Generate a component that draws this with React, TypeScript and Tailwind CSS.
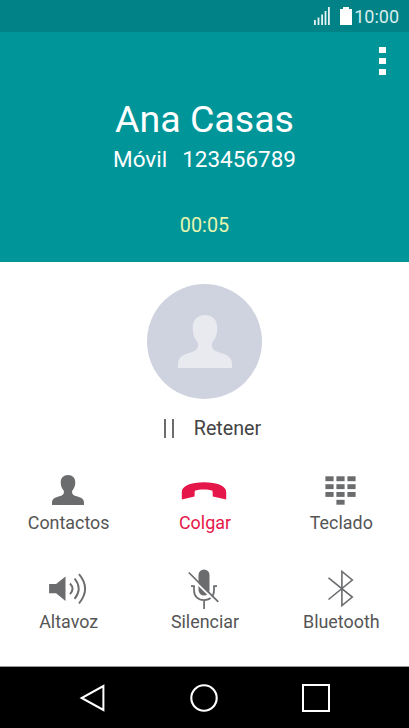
/**
 * In-call screen
 * Shows the caller, the call timer and the call actions.
 */
import type { ReactNode } from 'react';

interface IconProps {
  className?: string;
}

function PersonIcon({ className }: IconProps) {
  return (
    <svg viewBox="0 0 54 53" fill="currentColor" preserveAspectRatio="none" className={className}>
      <path d="M27 0C34.5 0 39.3 5 39.3 13C39.3 19 37.5 23.5 35 26.5C33.6 28.2 33.6 30.5 34.3 32.5C35.2 35.5 39 36.8 43 38C50 40.2 54 43 54 49V53H0V49C0 43 4 40.2 11 38C15 36.8 18.8 35.5 19.7 32.5C20.4 30.5 20.4 28.2 19 26.5C16.5 23.5 14.7 19 14.7 13C14.7 5 19.5 0 27 0Z" />
    </svg>
  );
}

function ContactsIcon() {
  return <PersonIcon className="mt-[5px] h-[30px] w-8" />;
}

function HangUpIcon() {
  return (
    <svg width="50" height="40" viewBox="0 0 50 40" fill="currentColor">
      <path d="M2.8 29.5V22C2.8 16 12 12.3 25 12.3S47.2 16 47.2 22V29.5L33.8 26.4L33.5 20.7C29 19 20.5 19 15.8 20.7L15.5 26.6Z" />
    </svg>
  );
}

function KeypadIcon() {
  return (
    <svg width="50" height="40" viewBox="0 0 50 40" fill="currentColor">
      {[6.3, 14.2, 22].map((y) =>
        [9.4, 20.4, 31.4].map((x) => <rect key={`${x}-${y}`} x={x} y={y} width="8.2" height="4.9" />)
      )}
      <rect x="20.4" y="29.8" width="8.2" height="4.9" />
    </svg>
  );
}

function SpeakerIcon() {
  return (
    <svg width="50" height="40" viewBox="0 0.8 50 40" fill="none" stroke="currentColor" strokeWidth="1.9">
      <path d="M6.1 15.7H13.1L22.5 8.3V32.7L13.1 25H6.1Z" fill="currentColor" stroke="none" />
      <path d="M27 15.3Q32 20.5 27 25.9M31.6 10.3Q39.8 20.5 31.6 30.7M36 6Q48.2 20.5 36 35.3" />
    </svg>
  );
}

function MuteIcon() {
  return (
    <svg width="50" height="40" viewBox="0 0.8 50 40" fill="none" stroke="currentColor" strokeWidth="1.7" className="overflow-visible">
      <rect x="19.5" y="1.3" width="11" height="26" rx="5.5" fill="currentColor" stroke="none" />
      <path d="M12 18H15V22C15 28 19 32 25.1 32S35 28 35 22V18H38M25.1 32V40.7" />
      <path d="M9 6.2L37.8 34.7" stroke="white" strokeWidth="2" />
      <path d="M9.8 4.3L39.3 33.7" />
    </svg>
  );
}

function BluetoothIcon() {
  return (
    <svg width="50" height="40" viewBox="0 0.8 50 40" fill="none" stroke="currentColor" strokeWidth="1.6">
      <path d="M12.5 9.7L36.3 28.9L25.9 37.3V3.3L36.3 11.8L12.5 31.3" />
    </svg>
  );
}

interface CallActionProps {
  icon: ReactNode;
  label: string;
  danger?: boolean;
}

function CallAction({ icon, label, danger }: CallActionProps) {
  return (
    <button className={`flex h-[98px] flex-col items-center ${danger ? 'text-[#e5174a]' : 'text-[#6b6c6e]'}`}>
      <span className="flex h-10 items-start justify-center">{icon}</span>
      <span className={`mt-[3px] pl-px text-[17.9px] leading-5 ${danger ? '' : 'text-[#555555]'}`}>{label}</span>
    </button>
  );
}

function StatusBar() {
  return (
    <div className="flex h-8 shrink-0 items-center justify-end bg-[#008286] pr-[10px] text-white">
      <svg width="17" height="18" viewBox="0 0 17 18" fill="currentColor" className="opacity-90">
        <rect x="0" y="13" width="1.8" height="5" />
        <rect x="3.6" y="10.5" width="1.8" height="7.5" />
        <rect x="7.2" y="7.5" width="1.8" height="10.5" />
        <rect x="10.6" y="4" width="1.8" height="14" />
        <rect x="14" y="0" width="1.8" height="18" />
      </svg>
      <svg width="12" height="18" viewBox="0 0 12 18" fill="currentColor" className="ml-[9px]">
        <path d="M3 0H9V2H12V18H0V2H3Z" />
      </svg>
      <span className="ml-[2px] pt-0.5 text-[18px] leading-[30px] text-[#d9eeee]">10:00</span>
    </div>
  );
}

function CallHeader() {
  return (
    <div className="flex h-[230px] shrink-0 flex-col bg-[#009599] text-white">
      <button className="mt-[15px] mr-[23px] flex h-[28px] flex-col justify-between self-end">
        <span className="h-1.5 w-[7px] bg-white" />
        <span className="h-1.5 w-[7px] bg-white" />
        <span className="h-1.5 w-[7px] bg-white" />
      </button>
      <h1 className="mt-[22px] text-center text-[37.5px] leading-[44px]">Ana Casas</h1>
      <p className="mt-[5px] flex justify-center gap-[15px] text-[22.5px] leading-[26px]">
        <span>Móvil</span>
        <span>123456789</span>
      </p>
      <p className="mt-[42px] text-center text-[19.8px] leading-6 text-[#e6f5ae]">00:05</p>
    </div>
  );
}

function NavBar() {
  return (
    <div className="flex h-[62px] shrink-0 items-center gap-[84px] border-t border-[#999999] bg-black pl-[78px]">
      <svg width="28" height="28" viewBox="0 0 28 28" fill="none" stroke="white" strokeWidth="2">
        <path d="M25.4 2V26L3.6 14Z" />
      </svg>
      <svg width="28" height="28" viewBox="0 0 28 28" fill="none" stroke="white" strokeWidth="2.1">
        <circle cx="14" cy="14" r="12.7" />
      </svg>
      <svg width="28" height="28" viewBox="0 0 28 28" fill="none" stroke="white" strokeWidth="2">
        <rect x="1" y="1" width="26" height="26" />
      </svg>
    </div>
  );
}

export default function App() {
  return (
    <div className="flex h-[728px] w-[409px] flex-col overflow-hidden bg-white font-[Roboto,sans-serif]">
      <StatusBar />
      <CallHeader />
      <div className="flex min-h-0 flex-1 flex-col items-center pt-[22px]">
        <div className="flex size-[115px] shrink-0 items-center justify-center rounded-full bg-[#cfd3df]">
          <PersonIcon className="h-[53px] w-[54px] text-[#e9eaef]" />
        </div>
        <button className="mt-[17px] flex h-6 shrink-0 items-center gap-5 pl-4 text-[19.7px] leading-6 text-[#444444]">
          <span className="flex h-[19px] gap-[6px]">
            <span className="w-[2px] bg-[#6b6c6e]" />
            <span className="w-[2px] bg-[#6b6c6e]" />
          </span>
          <span className="pt-0.5">Retener</span>
        </button>
        <div className="mt-[30px] grid w-full shrink-0 grid-cols-3 gap-y-px">
          <CallAction icon={<ContactsIcon />} label="Contactos" />
          <CallAction icon={<HangUpIcon />} label="Colgar" danger />
          <CallAction icon={<KeypadIcon />} label="Teclado" />
          <CallAction icon={<SpeakerIcon />} label="Altavoz" />
          <CallAction icon={<MuteIcon />} label="Silenciar" />
          <CallAction icon={<BluetoothIcon />} label="Bluetooth" />
        </div>
      </div>
      <NavBar />
    </div>
  );
}
